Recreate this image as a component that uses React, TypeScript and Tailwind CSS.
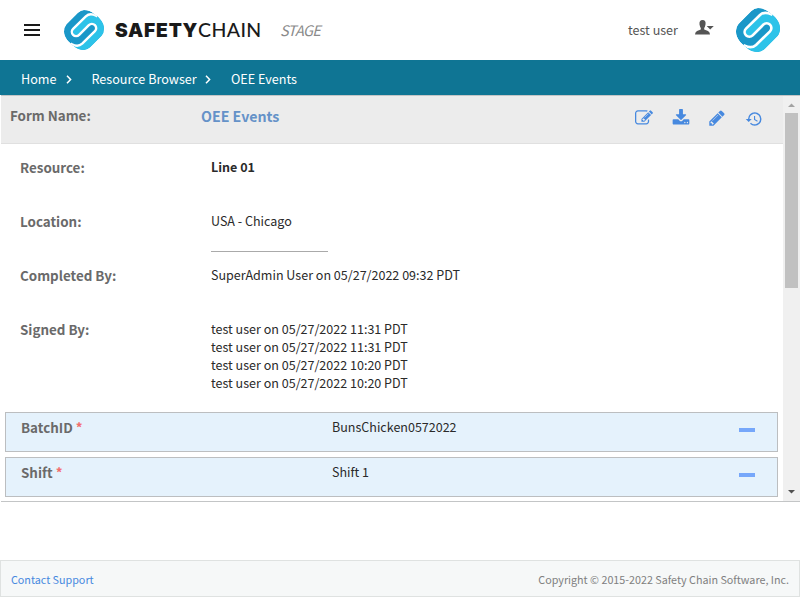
import { MdHistory } from "react-icons/md";
import type { ReactNode } from "react";

const SILHOUETTE = "M66 0Q86 0 100 13C118 26 132 42 132 60Q132 76 124 85L86 123Q76 132 66 132Q46 132 32 119C14 106 0 90 0 72Q0 56 8 47L46 9Q56 0 66 0Z";
const DIVIDER = "M106 19C96 14 82 12 72 21L30 62A14.1 14.1 0 0 0 50 82L82 50A14.1 14.1 0 0 1 102 70L60 111C50 120 36 118 26 113";

const EDIT = "M888 1184l116-116-152-152-116 116v56h96v96h56zm440-720q-16-16-33 1l-350 350q-17 17-1 33t33-1l350-350q17-17 1-33zm80 594v190q0 119-84.5 203.5t-203.5 84.5h-832q-119 0-203.5-84.5t-84.5-203.5v-832q0-119 84.5-203.5t203.5-84.5h832q63 0 117 25 15 7 18 23 3 17-9 29l-49 49q-14 14-32 8-23-6-45-6h-832q-66 0-113 47t-47 113v832q0 66 47 113t113 47h832q66 0 113-47t47-113v-126q0-13 9-22l64-64q15-15 35-7t20 29zm-96-738l288 288-672 672h-288v-288zm444 132l-92 92-288-288 92-92q28-28 68-28t68 28l152 152q28 28 28 68t-28 68z";
const DOWNLOAD = "M1344 1344q0-26-19-45t-45-19-45 19-19 45 19 45 45 19 45-19 19-45zm256 0q0-26-19-45t-45-19-45 19-19 45 19 45 45 19 45-19 19-45zm128-224v320q0 40-28 68t-68 28h-1472q-40 0-68-28t-28-68v-320q0-40 28-68t68-28h465l135 136q58 56 136 56t136-56l136-136h464q40 0 68 28t28 68zm-325-569q17 41-14 70l-448 448q-18 19-45 19t-45-19l-448-448q-31-29-14-70 17-39 59-39h256v-448q0-26 19-45t45-19h256q26 0 45 19t19 45v448h256q42 0 59 39z";
const PENCIL = "M491 1536l91-91-235-235-91 91v107h128v128h107zm523-928q0-22-22-22-10 0-17 7l-542 542q-7 7-7 17 0 22 22 22 10 0 17-7l542-542q7-7 7-17zm-54-192l416 416-832 832h-416v-416zm683 96q0 53-37 90l-166 166-416-416 166-165q36-38 90-38 53 0 91 38l235 234q37 39 37 91z";

function Logo({ className, id }: { className: string; id: string }) {
  return (
    <svg className={className} viewBox="0 0 132 132">
      <clipPath id={id}><path d={SILHOUETTE} /></clipPath>
      <g clipPath={`url(#${id})`}>
        <path d={SILHOUETTE} fill="#1a97c8" />
        <path d={`${DIVIDER}L20 140H140V10Z`} fill="#2dc3e9" />
        <path d={DIVIDER} fill="none" stroke="#fff" strokeWidth="8" strokeLinecap="square" />
      </g>
    </svg>
  );
}

function Row({ label, children, className }: { label: string; children: ReactNode; className: string }) {
  return (
    <div className={`flex leading-[18px] ${className}`}>
      <div className="w-[191px] text-[13.4px] font-bold text-[#6a6a6a]">{label}</div>
      <div className="text-[12.54px] text-[#2a2a2a]">{children}</div>
    </div>
  );
}

function Field({ label, value }: { label: string; value: string }) {
  return (
    <div className="mb-[5px] ml-[4px] flex h-[40px] w-[773px] border border-[#bcbec0] bg-[#e5f2fc] pl-[15px] pt-[5px] leading-[18px]">
      <div className="w-[311px] text-[13.4px] font-bold text-[#6a6a6a]">{label} <span className="text-[#f26d6d]">*</span></div>
      <div className="w-[407px] text-[12.53px] text-[#2a2a2a]">{value}</div>
      <div className="mt-[10px] h-[4px] w-[16px] bg-[#76a7fa]" />
    </div>
  );
}

function Chevron() {
  return <svg className="h-[9px] w-[6px]" viewBox="0 0 6 9"><path d="M1 .8L4.6 4.5L1 8.2" fill="none" stroke="#fff" strokeWidth="1.5" /></svg>;
}

export default function App() {
  return (
    <div className="flex h-[597px] w-[800px] flex-col overflow-hidden bg-white font-['Noto_Sans_CJK_SC',sans-serif]">
      <header className="flex h-[60px] shrink-0 items-center pl-[24px]">
        <div className="flex w-[40px] flex-col gap-[3px]">
          <div className="h-[2px] w-[16px] bg-[#1a1a1a]" /><div className="h-[2px] w-[16px] bg-[#1a1a1a]" /><div className="h-[2px] w-[16px] bg-[#1a1a1a]" />
        </div>
        <Logo className="h-[40px] w-[40px]" id="brand-mark" />
        <div className="ml-[11px] flex w-[165px] whitespace-nowrap font-[Inter] text-[19.2px] leading-[24px] text-[#1a1a1a]"><span className="w-[83px] font-black tracking-[0.8px]">SAFETY</span><span className="font-[Lato] text-[19.5px] font-medium tracking-[0.4px]">CHAIN</span></div>
        <div className="w-[348px] text-[14.5px] tracking-[-0.7px] italic text-[#8a8a8a]">STAGE</div>
        <div className="w-[67px] text-[12.55px] text-[#555]">test user</div>
        <svg className="mr-[21px] mb-[5px] h-[15px] w-[20px]" viewBox="0 0 20 15"><path d="M7.5 0C10 0 11 2 10.5 4.5Q10 7 9.2 8V9.5L13 11Q15 12 15 14.5H0Q0 12 2 11L5.8 9.5V8Q5 7 4.5 4.5Q4 0 7.5 0ZM11.7 6H18.8L15.2 9.5Z" fill="#555" /></svg>
        <Logo className="h-[44px] w-[44px]" id="tenant-mark" />
      </header>
      <nav className="flex h-[35px] shrink-0 items-center bg-[#0f7594] pl-[21px] pt-[3px] text-[12.6px] leading-[18px] text-white">
        <div className="w-[45px]">Home</div><div className="w-[25.5px]"><Chevron /></div>
        <div className="w-[113.5px]">Resource Browser</div><div className="w-[26px]"><Chevron /></div>
        <div>OEE Events</div>
      </nav>
      <main className="ml-px flex h-[407px] shrink-0 border-y border-[#c3c5c6]">
        <div className="w-[782px]">
          <div className="flex h-[48px] border-b border-[#e0e0e0] bg-[#ececec] pl-[9px] pt-[10px] leading-[18px]">
            <div className="w-[191px] text-[13.4px] font-bold text-[#6a6a6a]">Form Name:</div>
            <div className="w-[434px] pt-px text-[14.2px] font-bold text-[#6592c8]">OEE Events</div>
            <svg className="mr-[19px] mt-[3px] h-[18px] w-[18px]" viewBox="0 0 1792 1792"><path d={EDIT} fill="#4789df" /></svg>
            <svg className="mr-[18px] mt-[3px] h-[18px] w-[18px]" viewBox="0 0 1792 1792"><path d={DOWNLOAD} fill="#4789df" /></svg>
            <svg className="mr-[19px] mt-[3px] h-[18px] w-[18px]" viewBox="0 0 1792 1792"><path d={PENCIL} fill="#4789df" /></svg>
            <MdHistory className="mt-[4px] h-[18px] w-[18px] text-[#4789df]" />
          </div>
          <div className="h-[268px] pl-[19px] pt-[14px]">
            <Row label="Resource:" className="h-[54px]"><b>Line 01</b></Row>
            <Row label="Location:" className="h-[54px]">USA - Chicago<div className="mt-[21px] h-px w-[117px] bg-[#aaa]" /></Row>
            <Row label="Completed By:" className="h-[54px]">SuperAdmin User on 05/27/2022 09:32 PDT</Row>
            <Row label="Signed By:" className="h-[72px]">
              {["11:31", "11:31", "10:20", "10:20"].map((t, i) => <div key={i}>test user on 05/27/2022 {t} PDT</div>)}
            </Row>
          </div>
          <Field label="BatchID" value="BunsChicken0572022" />
          <Field label="Shift" value="Shift 1" />
        </div>
        <div className="flex w-[17px] flex-col items-center bg-[#f0f0f0]">
          <svg className="h-[17px] w-[17px]" viewBox="0 0 17 17"><path d="M5 11L8.5 7.5L12 11Z" fill="#a3a3a3" /></svg>
          <div className="h-[175px] w-[13px] bg-[#c1c1c1]" />
          <svg className="mt-auto h-[17px] w-[17px]" viewBox="0 0 17 17"><path d="M5 6L8.5 9.5L12 6Z" fill="#505050" /></svg>
        </div>
      </main>
      <footer className="mt-auto flex h-[37px] shrink-0 items-center justify-between border border-[#dfe2e1] bg-[#f6f8f8] px-[10px] pt-[3px] text-[10.75px] leading-[18px] text-[#808080]">
        <div className="text-[#4789df]">Contact Support</div><div>Copyright © 2015-2022 Safety Chain Software, Inc.</div>
      </footer>
    </div>
  );
}
